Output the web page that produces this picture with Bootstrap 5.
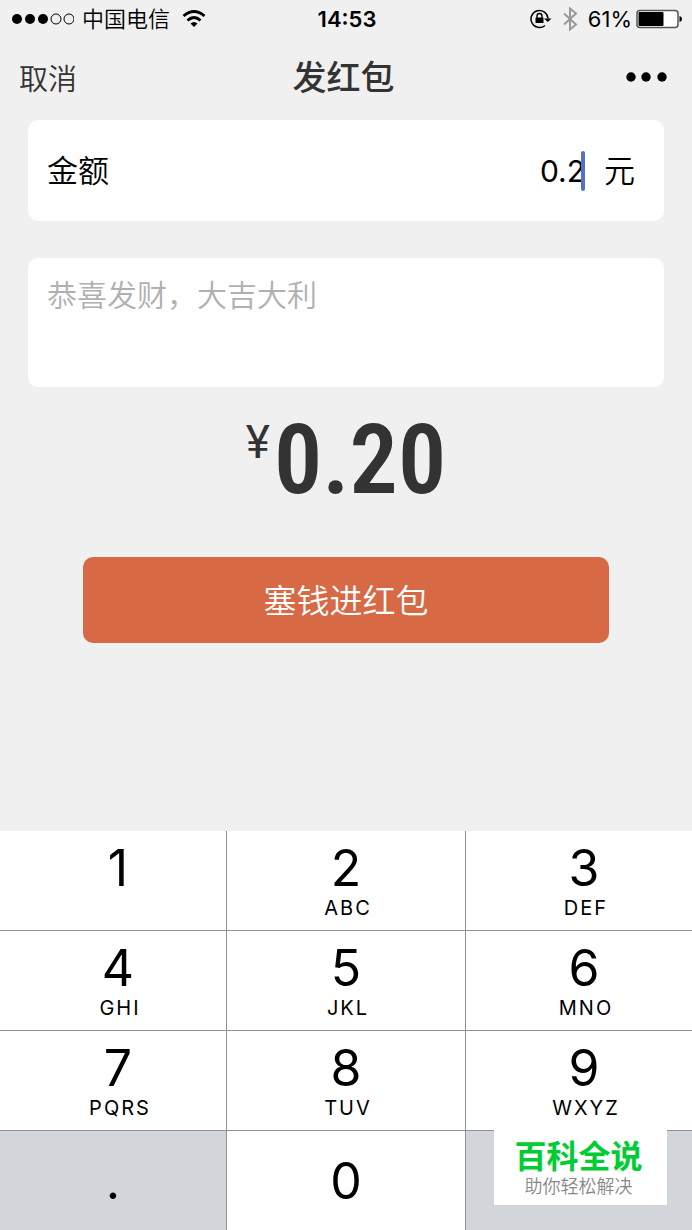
<!DOCTYPE html>
<html lang="zh-CN">
<head>
<meta charset="utf-8">
<meta name="viewport" content="width=device-width, initial-scale=1">
<title>发红包</title>
<link href="https://cdn.jsdelivr.net/npm/bootstrap@5.3.0/dist/css/bootstrap.min.css" rel="stylesheet">
<style>
  body { background: #f0f0f0; color: #000; font-family: Inter, "Noto Sans CJK SC", sans-serif; }
  .side { flex: 1 1 0; }
  .status-bar { height: 38px; padding: 0 10px 0 12px; font-size: 22px; line-height: 38px; }
  .carrier, .title-bar .btn, .amount-field label, .unit { font-weight: 350; }
  .clock { font-weight: 600; }
  .title-bar { height: 82px; padding: 0 24px 2px 19px; color: #333; }
  .title-bar .btn { font-size: 29px; line-height: 40px; color: #333; }
  .title-bar h1 { font-size: 34px; line-height: 44px; font-weight: 500; }
  .form-area { padding: 0 28px; }
  .field { background: #fff; border-radius: 10px; padding: 0 19px; }
  .amount-field { height: 101px; margin-bottom: 37px; padding-right: 29px; font-size: 31px; }
  .amount-field label, .unit { padding-top: 2px; }
  .amount-field input { font-size: 30px; line-height: 40px; color: #000; padding: 0 3px 0 0; }
  .caret { width: 4px; height: 40px; border-radius: 2px; background: #5470cf; right: 3px; top: 0; }
  textarea.field { height: 129px; padding-top: 17px; font-size: 30px; line-height: 40px; resize: none; font-weight: 350; }
  textarea.field::placeholder { color: #b0b0b0; opacity: 1; }
  .total { height: 170px; padding-top: 25px; color: #333; }
  .yen { font-family: Roboto, sans-serif; font-size: 46px; line-height: 60px; margin-right: 4px; }
  .figure-sum { font-family: "Roboto Condensed", Roboto, sans-serif; font-size: 96px; line-height: 96px; font-weight: 600; }
  .pay { margin: 0 55px; height: 86px; padding: 4px 0 0; border-radius: 10px; font-size: 33px; font-weight: 350; background: #d86945; color: #fff; border: 0; }
  .pay:hover { background: #c85c39; color: #fff; }
  .keypad { display: grid; grid-template-columns: 226fr 238fr 226fr; grid-auto-rows: 99px; gap: 1px; background: #8f9194; }
  .key { border: 0; background: #fff; color: #000; padding: 9px 0 0; font-size: 50px; line-height: 56px; }
  .key.outer { padding-left: 10px; }
  .key small { font-size: 20px; line-height: 24px; letter-spacing: 2px; padding-left: 4px; }
  .key.grey { background: #d2d5da; }
  .promo { right: 25px; bottom: 25px; width: 173px; height: 75px; background: #fff; padding: 8px 4px 0 0; }
  .promo strong { font-size: 32px; line-height: 38px; color: #0c3; font-weight: 700; }
  .promo span { font-size: 18px; line-height: 22px; color: #888; font-weight: 350; }
</style>
</head>
<body class="d-flex flex-column min-vh-100">
<header>
  <div class="status-bar d-flex align-items-center">
    <div class="side d-flex align-items-center">
      <svg class="me-2" width="62" height="12" viewBox="0 0 62 12" aria-hidden="true">
        <circle cx="5" cy="6" r="5"/><circle cx="18" cy="6" r="5"/><circle cx="31" cy="6" r="5"/>
        <g fill="none" stroke="#000"><circle cx="44" cy="6" r="5"/><circle cx="57" cy="6" r="5"/></g>
      </svg>
      <span class="carrier">中国电信</span>
      <svg class="ms-2" width="32" height="20" viewBox="0 0 32 20" aria-hidden="true">
        <g fill="none" stroke="#000" stroke-width="2.800"><path d="M5.500 7Q16 -2 26.500 7"/><path d="M9.500 11.500Q16 5.500 22.500 11.500"/></g>
        <path d="M12.500 14.500Q16 11.500 19.500 14.500L16 18Z"/>
      </svg>
    </div>
    <span class="clock">14:53</span>
    <div class="side d-flex align-items-center justify-content-end">
      <svg width="24" height="20" viewBox="0 0 24 20" aria-hidden="true">
        <path d="M15 16.500A8.500 8.500 0 1 1 18 9.500" fill="none" stroke="#000" stroke-width="1.500"/>
        <path d="M14 9.500H21.500L17.800 13Z"/>
        <rect x="5.500" y="8.500" width="8" height="5.500" rx=".5"/><path d="M7 9V7a2.500 2.500 0 0 1 5 0V9" fill="none" stroke="#000" stroke-width="1.400"/>
      </svg>
      <svg class="mx-2" width="18" height="24" viewBox="0 0 18 24" aria-hidden="true">
        <path d="M2 6.500L14 17.500L8 22.500V1.500L14 6.500L2 17.500" fill="none" stroke="#999" stroke-width="2"/>
      </svg>
      <span>61%</span>
      <svg class="ms-1" width="46" height="20" viewBox="0 0 46 20" aria-hidden="true">
        <rect x="1" y="1.500" width="41" height="17" rx="3" fill="#fff" stroke="#555" stroke-width="1.500"/>
        <rect x="2.500" y="3" width="25" height="14" rx="1"/><path d="M43.500 7Q46 7.500 46 10T43.500 13Z"/>
      </svg>
    </div>
  </div>
  <nav class="title-bar d-flex align-items-center">
    <div class="side"><button type="button" class="btn border-0 p-0 pt-1">取消</button></div>
    <h1 class="m-0">发红包</h1>
    <div class="side d-flex justify-content-end">
      <button type="button" class="btn border-0 p-0" aria-label="更多">
        <svg class="d-block" width="42" height="12" viewBox="0 0 42 12"><circle cx="5" cy="5" r="4.700"/><circle cx="20" cy="5" r="4.700"/><circle cx="36" cy="5" r="4.700"/></svg>
      </button>
    </div>
  </nav>
</header>
<main class="form-area d-flex flex-column flex-grow-1">
  <div class="field amount-field d-flex align-items-center">
    <label class="text-nowrap" for="amount">金额</label>
    <div class="position-relative flex-grow-1 ms-3 me-3">
      <input id="amount" class="w-100 border-0 bg-transparent text-end d-block" type="text" inputmode="decimal" value="0.2">
      <span class="caret position-absolute"></span>
    </div>
    <span class="unit">元</span>
  </div>
  <textarea class="field w-100 border-0 d-block" aria-label="祝福语" placeholder="恭喜发财，大吉大利"></textarea>
  <div class="total d-flex justify-content-center align-items-start">
    <span class="yen">¥</span><span class="figure-sum">0.20</span>
  </div>
  <button type="button" class="btn pay">塞钱进红包</button>
</main>
<section class="keypad position-relative" aria-label="数字键盘">
  <button type="button" class="key outer d-flex flex-column align-items-center">1</button>
  <button type="button" class="key d-flex flex-column align-items-center">2<small>ABC</small></button>
  <button type="button" class="key outer d-flex flex-column align-items-center">3<small>DEF</small></button>
  <button type="button" class="key outer d-flex flex-column align-items-center">4<small>GHI</small></button>
  <button type="button" class="key d-flex flex-column align-items-center">5<small>JKL</small></button>
  <button type="button" class="key outer d-flex flex-column align-items-center">6<small>MNO</small></button>
  <button type="button" class="key outer d-flex flex-column align-items-center">7<small>PQRS</small></button>
  <button type="button" class="key d-flex flex-column align-items-center">8<small>TUV</small></button>
  <button type="button" class="key outer d-flex flex-column align-items-center">9<small>WXYZ</small></button>
  <button type="button" class="key grey p-0">.</button>
  <button type="button" class="key p-0">0</button>
  <button type="button" class="key grey" aria-label="删除"></button>
  <div class="promo position-absolute d-flex flex-column align-items-center">
    <strong>百科全说</strong><span>助你轻松解决</span>
  </div>
</section>
<script src="https://cdn.jsdelivr.net/npm/bootstrap@5.3.0/dist/js/bootstrap.bundle.min.js"></script>
</body>
</html>
